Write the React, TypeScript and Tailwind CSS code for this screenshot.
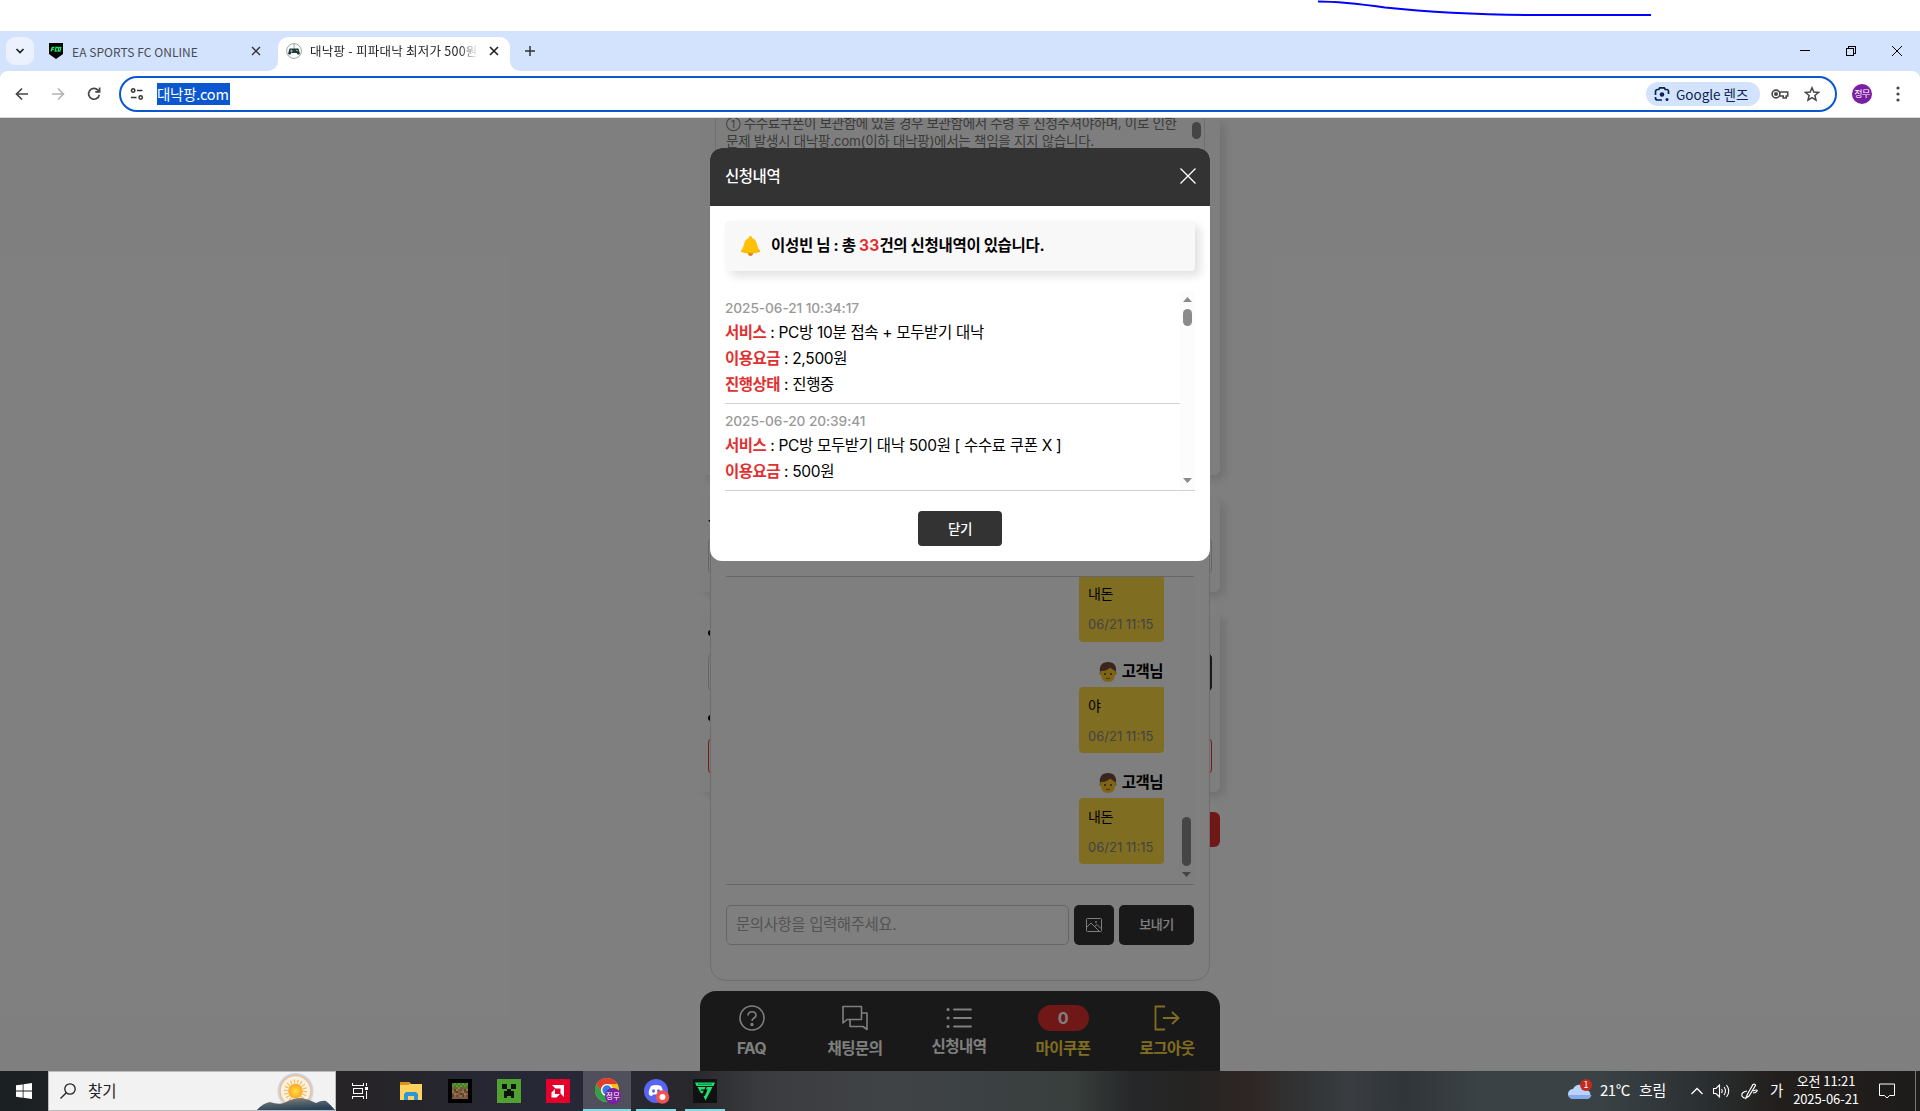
import React from "react";

type P = { className?: string };

const items = [
  { date: "2025-06-21 10:34:17", rows: [["서비스", "PC방 10분 접속 + 모두받기 대낙"], ["이용요금", "2,500원"], ["진행상태", "진행중"]] },
  { date: "2025-06-20 20:39:41", rows: [["서비스", "PC방 모두받기 대낙 500원 [ 수수료 쿠폰 X ]"], ["이용요금", "500원"]] },
];

function Cross({ className = "" }: P) {
  return (
    <svg viewBox="0 0 10 10" className={className} fill="none" stroke="currentColor">
      <path d="M1 1l8 8M9 1l-8 8" />
    </svg>
  );
}

function TabStrip() {
  return (
    <div className="relative flex h-10 items-end bg-[#d3e3fd]">
      <div className="mb-[6px] ml-[6px] flex h-7 w-7 items-center justify-center rounded-[9px] bg-[#ebf2fe]">
        <svg viewBox="0 0 10 10" className="h-[10px] w-[10px]" fill="none" stroke="#1f1f1f" strokeWidth="1.7"><path d="M1.5 3l3.5 3.5L8.5 3" /></svg>
      </div>
      <div className="ml-[14px] flex h-[34px] w-[230px] items-center pb-[6px]">
        <svg viewBox="0 0 16 16" className="h-4 w-4 shrink-0">
          <path d="M1 0h14v11l-7 5-7-5z" fill="#000" />
          <path d="M3 8.500l1.200-4h2.300M3.800 6.500h2M10 4.500H8L7.200 8h1.600M12.800 4.500h-2l-.8 3.500h2z" stroke="#1fe06a" strokeWidth="1.300" fill="none" />
        </svg>
        <span className="ml-2 mt-[1px] w-[127px] whitespace-nowrap text-[12px] leading-4 tracking-[0.060px] text-[#474c53]">EA SPORTS FC ONLINE</span>
        <Cross className="ml-[52px] h-[10px] w-[10px] stroke-[1.4] text-[#333]" />
      </div>
      <div className="relative flex h-[34px] w-[232px] items-center rounded-t-[10px] bg-white pb-[6px] pl-2">
        <svg viewBox="0 0 10 10" className="absolute -left-[10px] bottom-0 h-[10px] w-[10px]"><path d="M10 0v10H0a10 10 0 0 0 10-10z" fill="#fff" /></svg>
        <svg viewBox="0 0 10 10" className="absolute -right-[10px] bottom-0 h-[10px] w-[10px]"><path d="M0 0v10h10A10 10 0 0 1 0 0z" fill="#fff" /></svg>
        <svg viewBox="0 0 16 16" className="h-4 w-4 shrink-0">
          <circle cx="8" cy="8" r="7.400" fill="#fff" stroke="#93aaa7" />
          <path d="M8 .5V6" stroke="#93aaa7" />
          <path d="M3.500 5.500h9L14 11l-2 .8L10.500 10h-5L4 11.800 2 11z" fill="#24393b" />
          <path d="M4 8h3M5.500 6.500v3M10 7.500h2" stroke="#9fc0bd" strokeWidth=".8" />
        </svg>
        <span className="ml-[8px] w-[169px] whitespace-nowrap text-[12.500px] leading-4 tracking-[0.250px] text-[#1f1f1f] [mask-image:linear-gradient(90deg,#000_88%,transparent)]">대낙팡 - 피파대낙 최저가 500원</span>
        <Cross className="ml-[10px] h-[10px] w-[10px] stroke-[1.600] text-[#1f1f1f]" />
      </div>
      <svg viewBox="0 0 12 12" className="mb-[14px] ml-[14px] h-3 w-3" stroke="#333" strokeWidth="1.500"><path d="M6 1v10M1 6h10" /></svg>
      <div className="mb-[14px] ml-auto mr-[17px] flex items-center gap-[35px] text-black">
        <svg viewBox="0 0 10 12" className="h-3 w-[10px]" shapeRendering="crispEdges"><path d="M0 5.500h10" stroke="#000" /></svg>
        <svg viewBox="0 0 12 12" className="h-3 w-3" fill="none" stroke="#000" shapeRendering="crispEdges"><path d="M1.500 3.500h7v7h-7zM3.500 3.500v-2h7v7h-2" /></svg>
        <svg viewBox="0 0 12 12" className="-ml-[1px] h-3 w-3" stroke="#000"><path d="M1 1l10 10M11 1L1 11" /></svg>
      </div>
    </div>
  );
}

function Toolbar() {
  return (
    <div className="bg-[#d3e3fd]">
      <div className="flex h-[47px] items-center rounded-t-[8px] border-b border-[#d5dad8] bg-white">
        <div className="flex w-[119px] shrink-0 items-center gap-5 pl-[14px]">
          <svg viewBox="0 0 16 16" className="h-4 w-4" fill="none" stroke="#474747" strokeWidth="1.700"><path d="M14 8H3M8 2.500L2.500 8 8 13.500" /></svg>
          <svg viewBox="0 0 16 16" className="h-4 w-4" fill="none" stroke="#b3b3b3" strokeWidth="1.600"><path d="M2 8h11M8 2.500L13.500 8 8 13.500" /></svg>
          <svg viewBox="0 0 16 16" className="h-4 w-4" fill="none" stroke="#474747" strokeWidth="1.700"><path d="M13.300 8.800A5.400 5.400 0 1 1 12 4.200l1.300 1.300M13.600 1.500v4.300H9.300" /></svg>
        </div>
        <div className="flex h-9 w-[1718px] shrink-0 items-center rounded-full border-2 border-[#0b57d0] pl-[9px]">
          <svg viewBox="0 0 14 14" className="h-[14px] w-[14px]" fill="none" stroke="#333" strokeWidth="1.500"><circle cx="3.200" cy="3.500" r="1.700" /><path d="M7 3.500h5.500M1 10.500h5.500" /><circle cx="10.700" cy="10.500" r="1.700" /></svg>
          <span className="ml-[13px] flex h-[22px] w-[73px] items-center whitespace-nowrap bg-[#0b57d0] text-[14.500px] tracking-[-0.25px] text-white">대낙팡.com</span>
          <div className="ml-auto mr-[11px] flex h-6 w-[114px] items-center rounded-full bg-[#d3e3fd] pl-2 text-[#0a2352]">
            <svg viewBox="0 0 16 16" className="h-4 w-4" fill="none" stroke="#0a2352" strokeWidth="1.700"><path d="M1.500 9V5.500a2 2 0 0 1 2-2h1.300l1-1.700h4.400l1 1.700h1.300a2 2 0 0 1 2 2V8M1.500 11v1a2 2 0 0 0 2 2H8" /><circle cx="8" cy="8.500" r="2.300" fill="#0a2352" stroke="none" /><circle cx="13" cy="13.500" r="1.500" fill="#0a2352" stroke="none" /></svg>
            <span className="ml-[6px] whitespace-nowrap text-[13.500px]">Google 렌즈</span>
          </div>
          <svg viewBox="0 0 18 14" className="mr-[15px] h-[14px] w-[18px]" fill="none" stroke="#474747" strokeWidth="1.600"><circle cx="5" cy="7" r="3.900" /><circle cx="5" cy="7" r="1.200" fill="#474747" /><path d="M8.500 5h8.200v4h-1.500v2h-3V9H8.500" /></svg>
          <svg viewBox="0 0 16 16" className="mr-[15px] h-4 w-4" fill="none" stroke="#474747" strokeWidth="1.500"><path d="M8 1.800l1.800 4.300 4.700.4-3.600 3 1.100 4.600L8 11.700l-4 2.400 1.100-4.600-3.600-3 4.700-.4z" /></svg>
        </div>
        <div className="ml-[15px] flex h-5 w-5 items-center justify-center whitespace-nowrap rounded-full bg-[#7b1fa2] text-[9px] tracking-[-0.5px] text-white">정무</div>
        <svg viewBox="0 0 4 16" className="ml-6 h-4 w-1" fill="#474747"><circle cx="2" cy="2" r="1.600" /><circle cx="2" cy="8" r="1.600" /><circle cx="2" cy="14" r="1.600" /></svg>
      </div>
    </div>
  );
}

function ServicePage() {
  return (
    <div className="mx-auto flex h-full w-[520px] flex-col">
      <div className="h-[357px] shrink-0 rounded-b-md bg-[#fdfdfd] px-[15px] shadow-[5px_5px_10px_rgba(0,0,0,0.12)]">
        <div className="flex h-[200px] justify-between border-x border-[#dedede] pl-[10px] text-[13.500px] leading-[18px] tracking-[-0.350px] text-[#777]">
          <div className="-mt-[4px] whitespace-nowrap"><span className="text-[10.500px] leading-none">①</span> 수수료쿠폰이 보관함에 있을 경우 보관함에서 수령 후 신청주셔야하며, 이로 인한<br /><span className="tracking-[-0.280px]">문제 발생시 대낙팡.com(이하 대낙팡)에서는 책임을 지지 않습니다.</span></div>
          <div className="mr-[3px] mt-1 h-[17px] w-[9px] shrink-0 rounded-full bg-[#8b8b8b]" />
        </div>
      </div>
      <div className="mt-[22px] h-[95px] shrink-0 rounded-md bg-[#fdfdfd] px-2 pt-[14px] shadow-[5px_5px_10px_rgba(0,0,0,0.12)]">
        <div className="mb-[11px] h-[15px] text-[15px] font-bold leading-[15px]">ㅗ</div>
        <div className="h-[38px] rounded-md border border-[#ccc]" />
      </div>
      <div className="mt-[20px] h-[180px] shrink-0 rounded-md bg-[#fdfdfd] px-2 pt-[12px] shadow-[5px_5px_10px_rgba(0,0,0,0.12)]">
        <div className="flex h-[29px] items-center pb-[12px]"><i className="h-[6px] w-[6px] rounded-full bg-black" /></div>
        <div className="flex h-[39px] justify-end rounded-md bg-[linear-gradient(90deg,transparent_50%,#333_50%)]"><div className="h-full w-full rounded-md border border-[#ccc] border-r-[#333]" /></div>
        <div className="mt-[2px] flex h-[43px] items-center pt-[5px]"><i className="h-[6px] w-[6px] rounded-full bg-black" /></div>
        <div className="h-[38px] rounded-md border border-[#e03131]" />
      </div>
      <div className="ml-auto mt-5 h-[35px] w-[255px] shrink-0 rounded-md bg-[#e03131]" />
    </div>
  );
}

function Bubble({ text, first }: { text: string; first?: boolean }) {
  return (
    <div className="flex flex-col items-end">
      {!first && (
        <div className="flex h-[45px] items-end pb-[3px]">
          <svg viewBox="0 0 18 20" className="mb-[2px] mr-[5px] h-5 w-[18px]">
            <path d="M1.500 8Q1.500 2 9 2t7.500 6v4H1.500z" fill="#754a3f" />
            <circle cx="1.500" cy="11.500" r="1.400" fill="#f5b921" /><circle cx="16.500" cy="11.500" r="1.400" fill="#f5b921" />
            <path d="M2 9q6 0 9-3.500L16 9v3q0 8-7 8t-7-8z" fill="#ffc928" />
            <path d="M1 10C0 4 3 0 9 0s9 4 8 10c-1-3-2.500-5-5-5-3 1.500-6 3.500-10 3.800z" fill="#754a3f" />
            <circle cx="6" cy="12" r="1" fill="#543930" /><circle cx="12" cy="12" r="1" fill="#543930" /><path d="M7 16q2 1.500 4 0" stroke="#8a5a1a" fill="none" />
          </svg>
          <b className="mr-[1px] text-[15.500px] font-bold leading-6 tracking-[-0.5px]">고객님</b>
        </div>
      )}
      <div className={`${first ? "h-[65px] rounded-b-[4px] pt-[7px]" : "h-[66px] rounded-[4px] rounded-tr-none pt-[9px]"} w-[85px] bg-[#ffda43] px-[9px]`}>
        <div className="text-[14px] leading-[19px] tracking-[-0.5px]">{text}</div>
        <div className="mt-[12px] whitespace-nowrap font-['Inter'] text-[13px] leading-[19px] text-[#888]">06/21 11:15</div>
      </div>
    </div>
  );
}

function ChatPanel() {
  return (
    <div className="absolute left-[710px] top-[40px] flex h-[823px] w-[500px] flex-col rounded-2xl border border-[#dadada] bg-white px-[15px] pt-[417px]">
      <div className="flex h-[309px] justify-end border-y border-[#ccc]">
        <div className="mr-[15px] flex flex-col">
          <Bubble text="내돈" first />
          <Bubble text="야" />
          <Bubble text="내돈" />
        </div>
        <div className="flex w-[15px] flex-col items-center justify-end bg-[#fcfcfc] pb-[7px]">
          <div className="mb-[6px] h-[49px] w-[9px] rounded-full bg-[#8b8b8b]" />
          <svg viewBox="0 0 9 5" className="h-[5px] w-[9px]"><path d="M0 0h9L4.500 5z" fill="#8b8b8b" /></svg>
        </div>
      </div>
      <div className="mt-5 flex h-10 gap-[5px]">
        <div className="flex flex-1 items-center rounded-[5px] border border-[#ccc] pl-[9px] text-[15.500px] tracking-[-0.42px] text-[#a8a8a8]">문의사항을 입력해주세요.</div>
        <div className="flex w-10 items-center justify-center rounded-[5px] bg-[#333]">
          <svg viewBox="0 0 16 14" className="h-[14px] w-4" fill="none" stroke="#fff"><rect x=".5" y=".5" width="15" height="13" rx="1" /><path d="M1 9l4-4 8 8M8.500 8.500L11 6.500l4 4" /><circle cx="10" cy="4" r=".6" /></svg>
        </div>
        <div className="flex w-[75px] items-center justify-center rounded-[5px] bg-[#333] text-[13px] font-medium tracking-[-0.4px] text-white">보내기</div>
      </div>
    </div>
  );
}

function BottomNav() {
  const s = "h-[26px] w-[26px]";
  return (
    <div className="absolute bottom-0 left-[700px] flex h-20 w-[520px] rounded-t-2xl bg-[#333] pt-[14px] text-[15.500px] font-bold tracking-[-0.5px] text-white">
      <div className="flex w-[103px] flex-col items-center"><svg viewBox="0 0 26 26" className={s} fill="none" stroke="#fff" strokeWidth="1.600"><circle cx="13" cy="13" r="12" /><path d="M9 10.500C9 5.300 17 5.800 17 10.300c0 3-4 2.500-4 5.700" /><circle cx="13" cy="19.500" r=".9" fill="#fff" /></svg><span className="mt-[6px] leading-6">FAQ</span></div>
      <div className="flex w-[104px] flex-col items-center"><svg viewBox="0 0 26 26" className={s} fill="none" stroke="#fff" strokeWidth="1.600" strokeLinejoin="round"><path d="M1 1.500h18.500v13H5L1 18zM19.500 8H25v16.500L21 21.500H8v-7" /></svg><span className="mt-[6px] leading-6">채팅문의</span></div>
      <div className="flex w-[104px] flex-col items-center"><svg viewBox="0 0 26 22" className="mt-[2px] h-[22px] w-[26px]" fill="none" stroke="#fff" strokeWidth="1.800" strokeLinecap="round"><path d="M8 2.500h17M8 11h17M8 19.500h17" /><path d="M2 2.500h.1M2 11h.1M2 19.500h.1" strokeWidth="3" /></svg><span className="mt-[6px] leading-6">신청내역</span></div>
      <div className="flex w-[104px] flex-col items-center text-[#ffda43]"><div className="flex h-[26px] w-[51px] items-center justify-center rounded-full bg-[#e03131] text-[16px] text-white">0</div><span className="mt-[6px] leading-6">마이쿠폰</span></div>
      <div className="flex w-[104px] flex-col items-center text-[#ffda43]"><svg viewBox="0 0 26 26" className={s} fill="none" stroke="#ffda43" strokeWidth="1.800"><path d="M11 1.500H1.500v23H11M9 13h15.500M18 7l6.500 6-6.500 6" /></svg><span className="mt-[6px] leading-6">로그아웃</span></div>
    </div>
  );
}

function Modal() {
  return (
    <div className="absolute left-[710px] top-[30px] h-[413px] w-[500px] overflow-hidden rounded-[12px] bg-white">
      <div className="flex h-[58px] items-center justify-between bg-[#333] px-[15px] text-white">
        <span className="text-[15.500px] font-medium tracking-[-0.45px]">신청내역</span>
        <svg viewBox="0 0 16 16" className="-mr-[1px] -mt-[3px] h-4 w-4" stroke="#fff" strokeWidth="1.300"><path d="M.5.5l15 15M15.500.5l-15 15" /></svg>
      </div>
      <div className="mx-[15px] mt-[15px] flex h-[50px] items-center rounded-[4px] bg-[#f8f8f8] pl-4 shadow-[5px_5px_10px_rgba(0,0,0,0.12)]">
        <svg viewBox="0 0 19 20" className="h-5 w-[19px]"><path d="M9.500 0c1.300 0 1.700 1 1.700 2 6 2 3.800 9 7.800 12.500v1.200q-9.500 3-19 0v-1.200C4 11 1.800 4 7.800 2c0-1 .4-2 1.700-2z" fill="#ffc107" /><path d="M7 17h5q0 3-2.500 3T7 17z" fill="#e08214" /><path d="M0 14.500q9.500 3 19 0v1.200q-9.500 3-19 0z" fill="#ffb300" /></svg>
        <span className="ml-[11px] whitespace-nowrap text-[15.500px] font-bold tracking-[-0.32px] text-black">이성빈 님 : 총 <span className="font-bold tracking-[0.2px] text-[#e03131]">33</span>건의 신청내역이 있습니다.</span>
      </div>
      <div className="mx-[15px] mt-5 flex h-[200px] overflow-hidden border-b border-[#d3d3d3]">
        <div className="h-full w-[455px] overflow-hidden">
          {items.map((it) => (
            <div key={it.date} className="h-[113px] border-b border-[#d3d3d3] pt-[6px]">
              <div className="mb-[1px] font-['Inter'] text-[13.700px] font-medium leading-[22px] tracking-[-0.080px] text-[#999]">{it.date}</div>
              {it.rows.map(([k, v]) => (
                <div key={k} className="whitespace-nowrap text-[15.500px] leading-[26px] tracking-[-0.33px] text-black"><span className="font-bold tracking-[-0.5px] text-[#e03131]">{k}</span> : {v}</div>
              ))}
            </div>
          ))}
        </div>
        <div className="flex w-[15px] flex-col items-center bg-[#fcfcfc] pb-[7px] pt-[6px]">
          <svg viewBox="0 0 9 5" className="h-[5px] w-[9px]"><path d="M0 5h9L4.500 0z" fill="#8b8b8b" /></svg>
          <div className="mt-[7px] h-[17px] w-[9px] rounded-full bg-[#8b8b8b]" />
          <svg viewBox="0 0 9 5" className="mt-auto h-[5px] w-[9px]"><path d="M0 0h9L4.500 5z" fill="#8b8b8b" /></svg>
        </div>
      </div>
      <div className="mx-auto mt-5 flex h-[35px] w-[84px] items-center justify-center rounded-[4px] bg-[#333] pt-[1px] text-[13.500px] font-medium tracking-[-0.5px] text-white">닫기</div>
    </div>
  );
}

const dirt = ["#6d4c33", "#8b6544", "#59402b", "#9a7553", "#7b5a3d"];

function Taskbar() {
  const cells = Array.from({ length: 64 }, (_, i) => i);
  return (
    <div className="flex h-10 shrink-0 items-center bg-[linear-gradient(90deg,#1b2022_0px,#262427_360px,#262838_560px,#28282c_690px,#3a3b3e_760px,#404346_880px,#3b4142_1000px,#373e3c_1075px,#262829_1130px,#252423_1190px,#2e2523_1245px,#313335_1300px,#393d41_1350px,#30353a_1405px,#3b4246_1480px,#3a4246_1600px,#2b3032_1700px,#221e1c_1780px,#1e1c1b_1920px)] text-white">
      <div className="flex w-12 justify-center"><svg viewBox="0 0 16 16" className="h-4 w-4" fill="#fff"><path d="M0 2.300L6.700 1.400v6.200H0zM7.500 1.200L16 0v7.600H7.500zM0 8.400h6.700v6.300L0 13.700zM7.500 8.400H16V16l-8.500-1.200z" /></svg></div>
      <div className="relative flex h-10 w-[288px] items-center border border-[#bbb] bg-[#f2f2f2] pl-[11px]">
        <svg viewBox="0 0 16 16" className="h-4 w-4" fill="none" stroke="#222" strokeWidth="1.300"><circle cx="10" cy="6" r="5.200" /><path d="M6.300 9.700L.5 15.500" /></svg>
        <span className="-mt-[1px] ml-3 text-[15.500px] text-[#222]">찾기</span>
        <svg viewBox="0 0 78 38" className="absolute bottom-0 right-0 h-[38px] w-[78px]">
          <defs><linearGradient id="hill" x1="0" y1="0" x2=".4" y2="1"><stop offset="0" stopColor="#a98d77" /><stop offset=".5" stopColor="#59646b" /><stop offset="1" stopColor="#27435b" /></linearGradient><radialGradient id="sun"><stop offset="0" stopColor="#ffe23c" /><stop offset="1" stopColor="#fba62a" /></radialGradient></defs>
          <circle cx="38.500" cy="19" r="17" fill="#f7f0e6" stroke="#c6d6ee" strokeWidth="2" /><circle cx="38.500" cy="19" r="15.500" fill="none" stroke="#f3bd83" strokeWidth="1.500" />
          <circle cx="38.500" cy="19" r="9.500" fill="none" stroke="#f4bd49" strokeWidth="4" strokeDasharray="1.100 2.200" />
          <circle cx="38.500" cy="19" r="7.300" fill="url(#sun)" />
          <path d="M0 38q6-7 13-8 8 3 14 1 9-5 17-5 8 1 15 5 6-3 10-2 5 4 9 9z" fill="url(#hill)" />
        </svg>
      </div>
      <svg viewBox="0 0 16 16" className="ml-4 h-4 w-4" fill="none" stroke="#fff" shapeRendering="crispEdges"><path d="M.5 0v2.500h11V0M.5 16v-2.500h11V16M1.500 5.500h9v5h-9zM14.500 0v3M14.500 8v8" /><rect x="13" y="4" width="3" height="3" fill="#fff" stroke="none" /></svg>
      <svg viewBox="0 0 22 18" className="ml-8 h-[18px] w-[22px]"><path d="M0 0h9l2 2h11v16H0z" fill="#ffd35e" /><path d="M0 0h9l1 1.500L9 3H0z" fill="#dd9418" /><path d="M4 18v-6l2-2h10l2 2v6h-4v-4H8v4z" fill="#2f95db" /></svg>
      <svg viewBox="0 0 24 24" className="ml-[26px] h-6 w-6" shapeRendering="crispEdges"><path d="M0 0h24v24H0z" fill="#000" />{cells.map((i) => { const x = i % 8, y = Math.floor(i / 8); return <rect key={i} x={4 + x * 2} y={4 + y * 2} width="2" height="2" fill={y < 2 || (y === 2 && x % 3 === 0) ? ((x + y) % 2 ? "#5d9a32" : "#467c25") : dirt[(x * 3 + y * 7 + x * y) % 5]} />; })}</svg>
      <svg viewBox="0 0 24 24" className="ml-[25px] h-6 w-6" shapeRendering="crispEdges"><path d="M0 0h24v24H0z" fill="#51a032" /><path d="M5 5h5v5H5zM14 5h5v5h-5zM10 10h4v2h3v7h-3v-2h-4v2H7v-7h3z" fill="#0b1309" /></svg>
      <svg viewBox="0 0 24 24" className="ml-[25px] h-6 w-6"><path d="M0 0h24v24H0z" fill="#e4002b" /><path d="M6 6h12v12l-3.500-3.500v-5h-5zM9 10v5h5l-3.500 3.500H5.500v-5z" fill="#fff" /></svg>
      <div className="ml-[13px] flex h-10 w-12 items-center justify-center border-b-2 border-[#7fdbe5] bg-[#4f505b]">
        <svg viewBox="0 0 26 26" className="ml-[2px] mt-[2px] h-[26px] w-[26px] overflow-visible"><circle cx="12" cy="12" r="12" fill="#fbc116" /><path d="M1.600 6A12 12 0 0 1 22.400 6H12a6 6 0 0 0-5.200 9z" fill="#e33b2e" /><path d="M1.600 6A12 12 0 0 0 12 24l5.200-9a6 6 0 0 1-10.400 0z" fill="#2da14c" /><circle cx="12" cy="12" r="6" fill="#fff" /><circle cx="12" cy="12" r="4.700" fill="#2f7de9" /><circle cx="18" cy="18" r="8" fill="#7b1fa2" /><text x="18" y="20.700" textAnchor="middle" fontSize="7.500" fill="#fff">정무</text></svg>
      </div>
      <div className="ml-[5px] flex h-10 w-10 items-center justify-center border-b-2 border-[#7fdbe5]">
        <svg viewBox="0 0 24 24" className="ml-[2px] mt-[1px] h-6 w-6 overflow-visible"><circle cx="11" cy="12" r="12" fill="#5865f2" /><path d="M6 7q5-2 10 0 3 5 2 9-2 1-3 1l-1-1.500H8L7 17q-1 0-3-1-1-4 2-9z" fill="#fff" /><ellipse cx="8.500" cy="12" rx="1.500" ry="1.800" fill="#5865f2" /><ellipse cx="13.500" cy="12" rx="1.500" ry="1.800" fill="#5865f2" /><circle cx="17.500" cy="18" r="6.800" fill="#f0524f" /><circle cx="17.500" cy="18" r="3" fill="#fff" /></svg>
      </div>
      <div className="ml-[9px] flex h-10 w-10 items-center justify-center border-b-2 border-[#7fdbe5]">
        <svg viewBox="0 0 24 24" className="mt-[2px] h-6 w-6"><path d="M0 0h24v24H0z" fill="#111" /><path d="M2 3.500h20L20.500 7h-17z" fill="#1ee070" /><path d="M5 5.200h14" stroke="#0c7a3c" strokeWidth="1" /><path d="M4.500 8h8l-1.200 2.500H8.200l-.6 1.300h3.200l-1.200 2.500H8zM14 8h5.500L12.500 21.500l-2-4.500h1.300l2.900-6.500h-1.900z" fill="#1ee070" /></svg>
      </div>
      <div className="ml-auto flex items-center">
        <svg viewBox="0 0 26 20" className="h-5 w-[26px] overflow-visible"><path d="M5 18a5 5 0 0 1 0-10 7.500 7.500 0 0 1 14 1 4.700 4.700 0 0 1 0 9z" fill="#b9d3fa" /><path d="M5 18a5 5 0 0 1-4.500-4h23q-1 4-4.500 4z" fill="#86abeb" /><circle cx="18" cy="4" r="6" fill="#c42b1c" /><text x="18" y="7.200" textAnchor="middle" fontSize="9" fill="#fff">1</text></svg>
        <span className="-mt-[2px] ml-[6px] w-[39px] whitespace-nowrap text-[15px] tracking-[-0.5px]">21°C</span>
        <span className="-mt-[2px] w-[52px] text-[15px] tracking-[-0.3px]">흐림</span>
        <svg viewBox="0 0 12 8" className="h-2 w-3" fill="none" stroke="#fff" strokeWidth="1.300"><path d="M.5 7L6 1.500 11.500 7" /></svg>
        <svg viewBox="0 0 17 14" className="ml-[10px] h-[14px] w-[17px]" fill="none" stroke="#fff" strokeWidth="1.100"><path d="M.5 4.500h2.500l3.500-3.500v12L3 9.500H.5zM8.500 5q1.500 2 0 4M11 3q3 4 0 8M13.500 1q4.500 6 0 12" /></svg>
        <svg viewBox="0 0 17 17" className="ml-[11px] h-[17px] w-[17px]" fill="none" stroke="#fff" strokeWidth="1.200"><path d="M6 12L12 1.500q2-1 2.500 1L8 13l-3 2zM6 8q-6 1-5 5 2 4 7 0M12 8q5-2 4 0t-4 2" /></svg>
        <span className="-mt-[2px] ml-3 w-[15px] text-[14.500px]">가</span>
        <div className="-mt-[2px] ml-[8px] w-[66px] whitespace-nowrap text-center text-[13px] leading-[18px] tracking-[-0.1px]">오전 11:21<br />2025-06-21</div>
        <svg viewBox="0 0 16 16" className="ml-[20px] mr-5 h-4 w-4" fill="none" stroke="#fff"><path d="M.5 1h15v11.500h-5L8 15l-2.500-2.500h-5z" /></svg>
        <div className="mr-[4px] h-10 w-px bg-[#777]" />
      </div>
    </div>
  );
}

export default function App() {
  return (
    <div className="flex h-[1111px] w-[1920px] flex-col overflow-hidden bg-white font-['Noto_Sans_CJK_KR',sans-serif]">
      <div className="h-[31px] shrink-0">
        <svg viewBox="0 0 1920 31" className="h-[31px] w-[1920px]" fill="none" stroke="#00f" strokeWidth="2"><path d="M1318 1.500C1340 1.500 1360 4 1385 7.500Q1450 14.500 1530 15H1651" /></svg>
      </div>
      <TabStrip />
      <Toolbar />
      <main className="relative h-[953px] overflow-hidden bg-white font-['Inter','Noto_Sans_CJK_KR',sans-serif]">
        <ServicePage />
        <ChatPanel />
        <BottomNav />
        <div className="absolute inset-0 bg-black/50" />
        <Modal />
      </main>
      <Taskbar />
    </div>
  );
}
